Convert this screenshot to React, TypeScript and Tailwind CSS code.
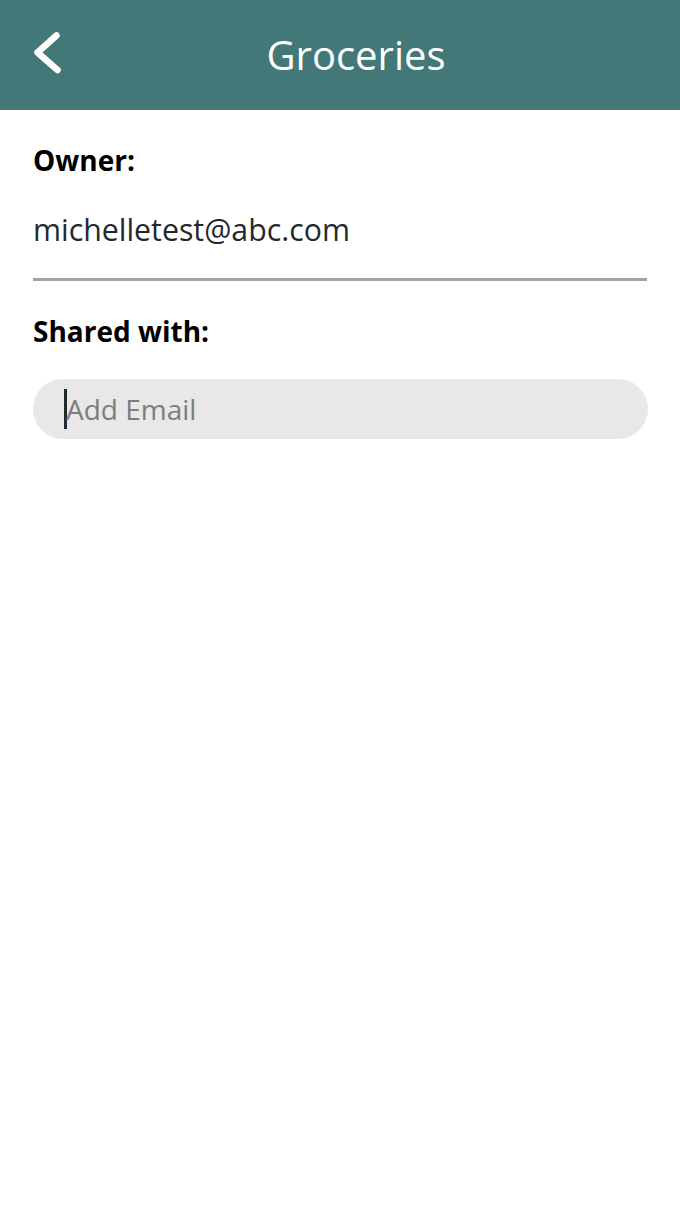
export default function App() {
  return (
    <div className="min-h-[1210px] bg-white font-['Open_Sans',sans-serif]">
      <header className="relative flex h-[110px] items-center justify-center bg-[#427877] pl-[32px]">
        <button className="absolute left-[30px] top-[28px] flex h-[50px] w-[36px] items-center justify-center">
          <svg width="36" height="50" viewBox="0 0 36 50" fill="none">
            <path
              d="M26.5 7.5 L7.5 24.5 L27.5 42"
              stroke="white"
              strokeWidth="6.5"
              strokeLinecap="round"
              strokeLinejoin="round"
            />
          </svg>
        </button>
        <h1 className="text-[40px] leading-none text-white">Groceries</h1>
      </header>

      <main className="px-[33px]">
        <p className="mt-[30px] text-[28px] leading-[40px] font-bold text-black">Owner:</p>
        <p className="mt-[30px] text-[30.3px] leading-[40px] text-[#1f2a2e]">michelletest@abc.com</p>
        <div className="mt-[28px] h-[3px] w-[614px] bg-[#a3a3a3]" />
        <p className="mt-[30px] text-[28px] leading-[40px] font-bold text-black">Shared with:</p>
        <div className="mt-[28px] flex h-[60px] w-[615px] items-center rounded-full bg-[#e9e7e8] pl-[31px]">
          <span className="h-[40px] w-[3px] shrink-0 bg-[#1f2a2e]" />
          <input
            className="-ml-[1px] w-full bg-transparent text-[28px] text-[#333] outline-none placeholder:text-[#7d7d7d]"
            placeholder="Add Email"
          />
        </div>
      </main>
    </div>
  );
}
